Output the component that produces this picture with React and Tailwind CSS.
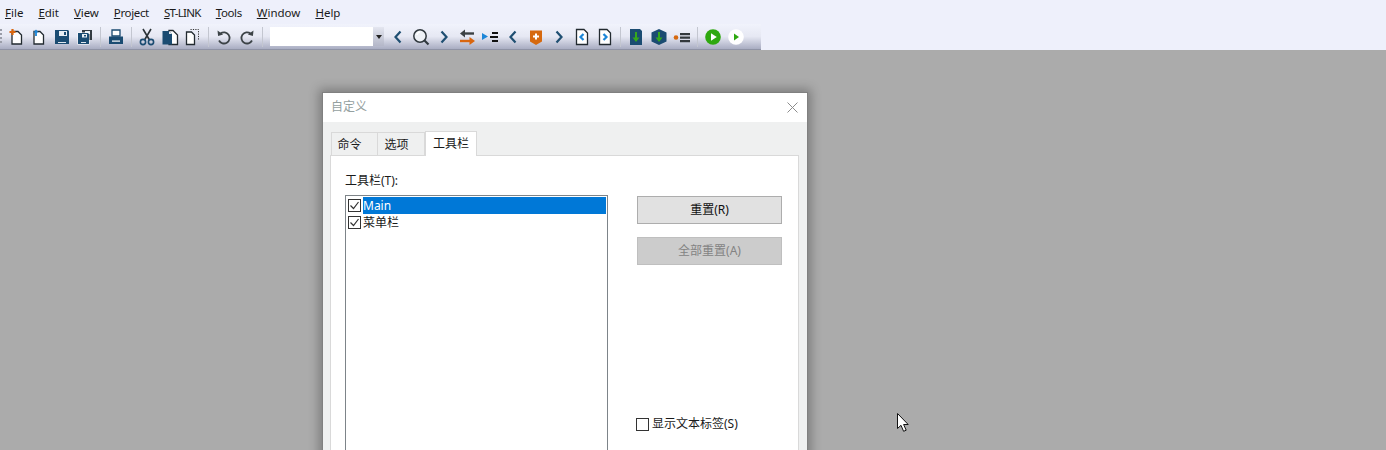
import React from 'react';

const cjk = { fontFamily: '"Noto Sans", "Noto Sans CJK SC", sans-serif' };
const NAVY = '#1b4c72';
const INK = '#222a30';

const menus = [
  ['F', 'ile', ''],
  ['E', 'dit', ''],
  ['V', 'iew', 'tracking-[-0.1px]'],
  ['P', 'roject', 'tracking-[-0.35px]'],
  ['S', 'T-LINK', 'tracking-[-0.7px]'],
  ['T', 'ools', 'tracking-[-0.4px]'],
  ['W', 'indow', ''],
  ['H', 'elp', ''],
];

const Doc = ({ fill = '#fff', x = 0 }) => (
  <path d={`M${6 + x} 4.5h6l3.5 3.5v9h-9.5z`} fill={fill} stroke={INK} strokeWidth="1.3" />
);

const Chevron = ({ dir = 'left', color = '#1f4f72' }) => (
  <path
    d={dir === 'left' ? 'M12.5 4.5L7.5 10l5 5.5' : 'M7.5 4.5l5 5.5-5 5.5'}
    fill="none"
    stroke={color}
    strokeWidth="2.2"
  />
);

const Floppy = ({ x = 3, y = 3, s = 14 }) => (
  <g>
    <path d={`M${x} ${y}h${s - 1}l1 1v${s - 1}h-${s}z`} fill={NAVY} />
    <rect x={x + 4} y={y + 1} width={s - 6} height={s / 2 - 2} fill="#e8eef4" />
    <rect x={x + s - 5} y={y + 2} width="2" height={s / 2 - 4} fill={NAVY} />
    <rect x={x + 3} y={y + s - 2} width={s - 6} height="1" fill="#dfe7ee" />
  </g>
);

const icons = {
  newDoc: (
    <>
      <Doc />
      <path d="M3.5 5h6M6.5 2v6" stroke="#d9660f" strokeWidth="2.2" />
    </>
  ),
  openDoc: (
    <>
      <Doc x={-1} />
      <path d="M7 2.5L4.5 5.5h1.6v3.5h1.8V5.5h1.6z" fill="#1c86d8" />
    </>
  ),
  save: <Floppy x={3} y={3} s={14} />,
  saveAll: (
    <>
      <path d="M7 3h10v10H7z" fill="#333b42" />
      <rect x="10" y="4" width="5" height="3" fill="#e8eef4" />
      <rect x="2.5" y="5.5" width="12" height="12" fill="#fff" />
      <Floppy x={3} y={6} s={11} />
    </>
  ),
  print: (
    <>
      <path d="M6 3h8v6H6z" fill="#fff" stroke="#1b4c72" strokeWidth="1.3" />
      <path d="M3 9.5h14V17H3z" fill={NAVY} />
      <rect x="6" y="13.5" width="8" height="1.2" fill="#fff" />
    </>
  ),
  cut: (
    <>
      <path d="M6 2l6.5 11M14 2L7.5 13" stroke="#2b3338" strokeWidth="1.6" fill="none" />
      <circle cx="6" cy="15" r="2.6" fill="none" stroke={NAVY} strokeWidth="1.6" />
      <circle cx="14" cy="15" r="2.6" fill="none" stroke={NAVY} strokeWidth="1.6" />
    </>
  ),
  copy: (
    <>
      <path d="M9 3.5h4l4.5 4.5v9.5H9z" fill="#fff" stroke={INK} strokeWidth="1.3" />
      <path d="M2.5 4h6.5l3 3v10.5H2.5z" fill={NAVY} />
      <path d="M9 4l3 3H9z" fill="#dfe7ee" />
    </>
  ),
  paste: (
    <>
      <path d="M7.5 2.5h8v10" fill="none" stroke="#333" strokeWidth="1" strokeDasharray="1.2 1.2" />
      <path d="M3.5 5h5l3 3v9.5h-8z" fill="#fff" stroke={INK} strokeWidth="1.3" />
    </>
  ),
  undo: (
    <>
      <path d="M6.5 6.5A5.6 5.6 0 1 1 5 13.5" fill="none" stroke="#3c4347" strokeWidth="1.8" />
      <path d="M3.5 3.5l.6 5.5 5-1.4z" fill="#3c4347" />
    </>
  ),
  redo: (
    <>
      <path d="M13.5 6.5A5.6 5.6 0 1 0 15 13.5" fill="none" stroke="#3c4347" strokeWidth="1.8" />
      <path d="M16.5 3.5l-.6 5.5-5-1.4z" fill="#3c4347" />
    </>
  ),
  search: (
    <>
      <circle cx="9" cy="9" r="6.2" fill="#eef1f6" stroke="#30383e" strokeWidth="1.5" />
      <path d="M6 8a3.5 3.5 0 0 1 3-3" stroke="#fff" strokeWidth="1.5" fill="none" />
      <path d="M13.5 13.5l4 4" stroke="#30383e" strokeWidth="2.2" />
    </>
  ),
  swap: (
    <>
      <path d="M17 6.5H6" stroke="#3c4144" strokeWidth="2.4" />
      <path d="M8 2.5l-5 4 5 4z" fill="#3c4144" />
      <path d="M3 14h11" stroke="#d9660f" strokeWidth="2.4" />
      <path d="M12.5 10l5.5 4-5.5 4z" fill="#d9660f" />
    </>
  ),
  bullets: (
    <>
      <path d="M2 6l6 3.5L2 13z" fill="#1c86d8" />
      <path d="M12 5h6v2h-6zM10 9h8v2h-8zM12 13h6v2h-6z" fill="#111" />
    </>
  ),
  shield: (
    <>
      <path d="M4 3.5h12v11l-6 3.5-6-3.5z" fill="#d6690f" />
      <path d="M10 6.5v6M7 9.5h6" stroke="#fff" strokeWidth="2" />
    </>
  ),
  docLeft: (
    <>
      <path d="M4.5 2.5h7.5l3.5 3.5v11.5h-11z" fill="#fff" stroke={INK} strokeWidth="1.3" />
      <path d="M11.5 7l-3 3 3 3" fill="none" stroke="#1c86d8" strokeWidth="2.2" />
    </>
  ),
  docRight: (
    <>
      <path d="M4.5 2.5h7.5l3.5 3.5v11.5h-11z" fill="#fff" stroke={INK} strokeWidth="1.3" />
      <path d="M8.5 7l3 3-3 3" fill="none" stroke="#1c86d8" strokeWidth="2.2" />
    </>
  ),
  download: (
    <>
      <path d="M4 2h10l2 2v14H4z" fill={NAVY} />
      <path d="M10 5v9" stroke="#35a81c" strokeWidth="2" />
      <path d="M6.5 10.5h7L10 15z" fill="#35a81c" />
    </>
  ),
  hex: (
    <>
      <path d="M10 2l7.5 3.5v9L10 18l-7.5-3.5v-9z" fill={NAVY} />
      <path d="M10 5v9" stroke="#35a81c" strokeWidth="2" />
      <path d="M6.5 10.5h7L10 15z" fill="#35a81c" />
    </>
  ),
  bpList: (
    <>
      <circle cx="4" cy="10.5" r="2.3" fill="#d6690f" />
      <path d="M8 6h10v2.2H8zM8 9.5h10v2.2H8zM8 13h10v2.2H8z" fill="#33383c" />
    </>
  ),
  playBig: (
    <>
      <circle cx="10" cy="10" r="7.8" fill="#2ea80f" />
      <path d="M8 6.2l5.8 3.8L8 13.8z" fill="#fff" />
    </>
  ),
  playSmall: (
    <>
      <circle cx="10" cy="10" r="7.8" fill="#fff" />
      <path d="M8 6.5l5 3.5-5 3.5z" fill="#2ea80f" />
    </>
  ),
};

const Tool = ({ name, children }) => (
  <div className="flex w-[23px] items-center justify-center">
    <svg width="20" height="20" viewBox="0 0 20 20">
      {children || icons[name]}
    </svg>
  </div>
);

const Sep = () => (
  <div className="flex w-[8px] justify-center">
    <div className="h-[20px] w-[1px] bg-[#c3c6d0]" />
  </div>
);

const CheckBox = ({ checked }) => (
  <div className="flex h-[13px] w-[13px] shrink-0 items-center justify-center border border-[#333] bg-white">
    {checked && (
      <svg width="11" height="11" viewBox="0 0 11 11">
        <path d="M1.5 5.5l3 3 5-6.5" fill="none" stroke="#333" strokeWidth="1.2" />
      </svg>
    )}
  </div>
);

export default function App() {
  return (
    <div className="relative h-[450px] w-[1386px] overflow-hidden bg-[#ababab]" style={cjk}>
      {/* Menu bar + toolbar */}
      <div className="h-[50px] bg-[#eef0fb]">
        <div className="flex h-[24px] items-center gap-[15px] pl-[5px] pt-[1px] text-[11.5px] text-[#1a1a1a]">
          {menus.map(([key, rest, cls]) => (
            <span key={key} className={cls}>
              <u>{key}</u>
              {rest}
            </span>
          ))}
        </div>
        <div className="relative flex h-[26px] w-[761px] items-center border-b border-[#8f93a5] bg-gradient-to-b from-[#f1f3fc] via-[#e6e8f3] to-[#a9adc2] pl-[4px]">
          <div className="absolute left-0 top-[5px] h-[15px] w-[2px] bg-[repeating-linear-gradient(to_bottom,#9a9da8_0,#9a9da8_2px,transparent_2px,transparent_4px)]" />
          <Tool name="newDoc" />
          <Tool name="openDoc" />
          <Tool name="save" />
          <Tool name="saveAll" />
          <Sep />
          <Tool name="print" />
          <Sep />
          <Tool name="cut" />
          <Tool name="copy" />
          <Tool name="paste" />
          <Sep />
          <Tool name="undo" />
          <Tool name="redo" />
          <Sep />
          <div className="ml-[4px] mr-[2px] flex h-[19px] w-[114px] items-center justify-end bg-white">
            <div className="flex h-[19px] w-[11px] items-center justify-center bg-gradient-to-b from-[#e4e6f0] to-[#b4b7c8]">
              <div className="h-0 w-0 border-x-[3.5px] border-t-[4px] border-x-transparent border-t-[#222]" />
            </div>
          </div>
          <Tool>
            <Chevron dir="left" />
          </Tool>
          <Tool name="search" />
          <Tool>
            <Chevron dir="right" />
          </Tool>
          <Tool name="swap" />
          <Tool name="bullets" />
          <Tool>
            <Chevron dir="left" />
          </Tool>
          <Tool name="shield" />
          <Tool>
            <Chevron dir="right" />
          </Tool>
          <Tool name="docLeft" />
          <Tool name="docRight" />
          <Sep />
          <Tool name="download" />
          <Tool name="hex" />
          <Tool name="bpList" />
          <Sep />
          <Tool name="playBig" />
          <Tool name="playSmall" />
        </div>
      </div>

      {/* Dialog */}
      <div className="ml-[322px] mt-[42px] h-[500px] w-[486px] bg-[#eff0f0] shadow-[0_0_10px_3px_rgba(0,0,0,0.28)] outline outline-1 -outline-offset-1 outline-[#808080]">
        <div className="mx-[1px] mt-[1px] flex h-[30px] items-center justify-between bg-white pl-[8px] pr-[9px] text-[12px] text-[#94a0a0]">
          <span>自定义</span>
          <svg width="11" height="11" viewBox="0 0 11 11">
            <path d="M.5.5l10 10M10.5.5l-10 10" stroke="#8c8c8c" strokeWidth="1" />
          </svg>
        </div>

        {/* Tabs */}
        <div className="flex h-[33px] items-end pl-[9px] text-[12px] text-[#1a1a1a]">
          <div className="flex h-[23px] w-[47px] items-center justify-center border border-b-0 border-[#d9d9d9] pr-[10px] pt-[2px]">命令</div>
          <div className="flex h-[23px] w-[47px] items-center justify-center border-y border-r border-b-0 border-[#d9d9d9] pr-[9px] pt-[2px]">选项</div>
          <div className="z-10 -mb-[1px] flex h-[25px] w-[52px] items-center justify-center border border-b-0 border-[#d9d9d9] bg-white">工具栏</div>
        </div>

        {/* Panel */}
        <div className="ml-[8px] flex h-[400px] w-[469px] border border-[#d9d9d9] bg-white pl-[14px] text-[12px] text-[#1a1a1a]">
          <div className="flex w-[263px] flex-col pt-[16px]">
            <div className="h-[23px] leading-[18px]">工具栏(T):</div>
            <div className="h-[320px] border border-[#7d8489] bg-white pt-[1px]">
              <div className="flex h-[17px] items-center gap-[2px] pl-[2px] pr-[1px]">
                <CheckBox checked />
                <div className="flex h-[17px] flex-1 items-center bg-[#0078d7] text-[12px] text-white">Main</div>
              </div>
              <div className="flex h-[17px] items-center gap-[2px] pl-[2px]">
                <CheckBox checked />
                <span>菜单栏</span>
              </div>
            </div>
          </div>
          <div className="ml-[29px] flex w-[145px] flex-col pt-[40px]">
            <div className="flex h-[28px] items-center justify-center border border-[#adadad] bg-[#e1e1e1] text-[#111]">重置(R)</div>
            <div className="mt-[13px] flex h-[28px] items-center justify-center border border-[#bfbfbf] bg-[#cccccc] text-[#838383]">全部重置(A)</div>
            <div className="-ml-[1px] mt-[150px] flex items-center gap-[3px]">
              <CheckBox />
              <span>显示文本标签(S)</span>
            </div>
          </div>
        </div>
      </div>

      {/* Mouse cursor */}
      <svg className="absolute left-[896px] top-[412px]" width="14" height="21" viewBox="0 0 14 21">
        <path d="M1.5 1.5v15l3.5-3.2 2.6 6 2.6-1.1-2.6-5.7h4.6z" fill="#fff" stroke="#111" strokeWidth="1" />
      </svg>
    </div>
  );
}
